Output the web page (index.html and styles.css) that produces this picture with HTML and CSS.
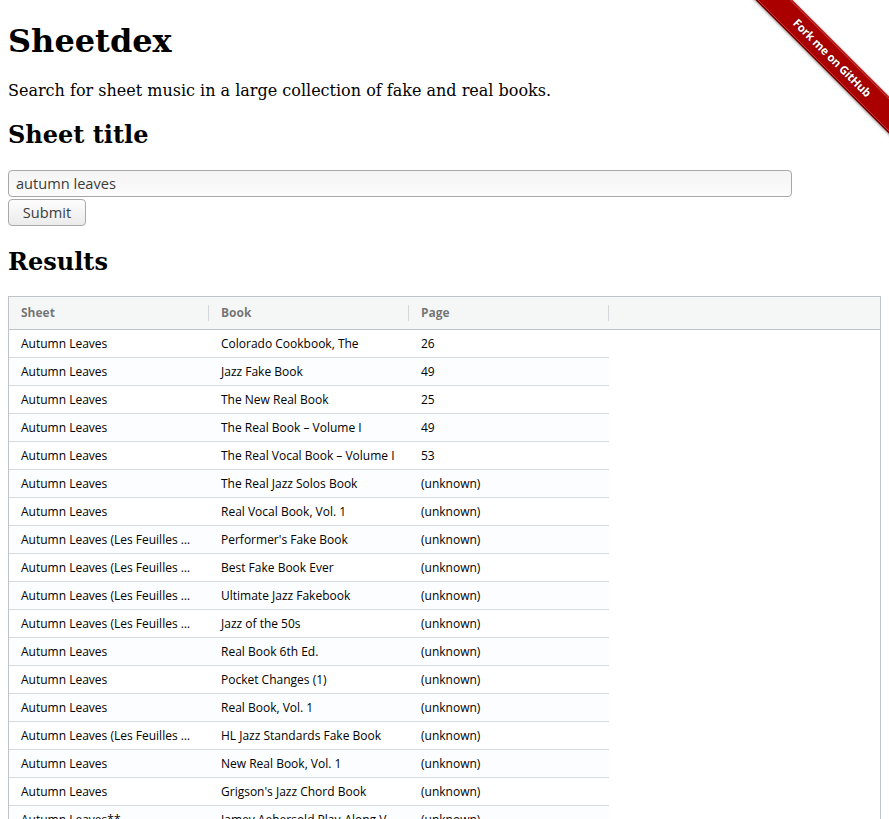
FILE: index.html
```html
<!DOCTYPE html>
<html lang="en">
<head>
<meta charset="utf-8">
<title>Sheetdex</title>
<link rel="stylesheet" href="styles.css">
</head>
<body>
<div class="ribbon-wrap"><a class="ribbon" href="#">Fork me on GitHub</a></div>
<h1 class="title">Sheetdex</h1>
<p class="lead">Search for sheet music in a large collection of fake and real books.</p>
<h2 class="section">Sheet title</h2>
<form class="search">
  <input class="search-input" type="text" value="autumn leaves">
  <button class="search-btn" type="button">Submit</button>
</form>
<h2 class="section results-title">Results</h2>
<div class="grid">
  <div class="grid-header">
    <div class="hcell">Sheet</div>
    <div class="hcell">Book</div>
    <div class="hcell">Page</div>
  </div>
  <div class="grid-body">
    <div class="row"><div class="cell">Autumn Leaves</div><div class="cell">Colorado Cookbook, The</div><div class="cell">26</div></div>
    <div class="row"><div class="cell">Autumn Leaves</div><div class="cell">Jazz Fake Book</div><div class="cell">49</div></div>
    <div class="row"><div class="cell">Autumn Leaves</div><div class="cell">The New Real Book</div><div class="cell">25</div></div>
    <div class="row"><div class="cell">Autumn Leaves</div><div class="cell">The Real Book – Volume I</div><div class="cell">49</div></div>
    <div class="row"><div class="cell">Autumn Leaves</div><div class="cell">The Real Vocal Book – Volume I</div><div class="cell">53</div></div>
    <div class="row"><div class="cell">Autumn Leaves</div><div class="cell">The Real Jazz Solos Book</div><div class="cell">(unknown)</div></div>
    <div class="row"><div class="cell">Autumn Leaves</div><div class="cell">Real Vocal Book, Vol. 1</div><div class="cell">(unknown)</div></div>
    <div class="row"><div class="cell">Autumn Leaves (Les Feuilles Mortes)</div><div class="cell">Performer's Fake Book</div><div class="cell">(unknown)</div></div>
    <div class="row"><div class="cell">Autumn Leaves (Les Feuilles Mortes)</div><div class="cell">Best Fake Book Ever</div><div class="cell">(unknown)</div></div>
    <div class="row"><div class="cell">Autumn Leaves (Les Feuilles Mortes)</div><div class="cell">Ultimate Jazz Fakebook</div><div class="cell">(unknown)</div></div>
    <div class="row"><div class="cell">Autumn Leaves (Les Feuilles Mortes)</div><div class="cell">Jazz of the 50s</div><div class="cell">(unknown)</div></div>
    <div class="row"><div class="cell">Autumn Leaves</div><div class="cell">Real Book 6th Ed.</div><div class="cell">(unknown)</div></div>
    <div class="row"><div class="cell">Autumn Leaves</div><div class="cell">Pocket Changes (1)</div><div class="cell">(unknown)</div></div>
    <div class="row"><div class="cell">Autumn Leaves</div><div class="cell">Real Book, Vol. 1</div><div class="cell">(unknown)</div></div>
    <div class="row"><div class="cell">Autumn Leaves (Les Feuilles Mortes)</div><div class="cell">HL Jazz Standards Fake Book</div><div class="cell">(unknown)</div></div>
    <div class="row"><div class="cell">Autumn Leaves</div><div class="cell">New Real Book, Vol. 1</div><div class="cell">(unknown)</div></div>
    <div class="row"><div class="cell">Autumn Leaves</div><div class="cell">Grigson's Jazz Chord Book</div><div class="cell">(unknown)</div></div>
    <div class="row"><div class="cell">Autumn Leaves**</div><div class="cell">Jamey Aebersold Play-Along Vol. 54</div><div class="cell">(unknown)</div></div>
    <div class="row"><div class="cell">Autumn Leaves</div><div class="cell">Jazz Standards</div><div class="cell">(unknown)</div></div>
  </div>
</div>
</body>
</html>
```

FILE: styles.css
```css
html, body {
  background: #fff;
}
body {
  margin: 8px;
  font-family: "DejaVu Serif", serif;
  color: #000;
}
.title {
  font-size: 32px;
  font-weight: bold;
  margin: 15px 0 22px;
  line-height: 1.164;
}
.lead {
  font-size: 16px;
  margin: 0 0 20px;
  line-height: 1.164;
}
.section {
  font-size: 24px;
  font-weight: bold;
  margin: 0;
  line-height: 1.164;
}
.search {
  display: flex;
  flex-direction: column;
  align-items: flex-start;
  gap: 2px;
  margin: 21px 0 0;
}
.search-input {
  box-sizing: border-box;
  width: 784px;
  height: 27px;
  margin: 0;
  padding: 0 7px;
  border: 1px solid #a7a7a7;
  border-radius: 4px;
  background: linear-gradient(#f4f4f4, #fcfcfc);
  font-family: "Open Sans", sans-serif;
  font-size: 14.6px;
  color: #3c3c3c;
  outline: none;
}
.search-btn {
  box-sizing: border-box;
  width: 78px;
  height: 27px;
  margin: 0;
  padding: 0;
  border: 1px solid #a9a9a9;
  border-radius: 4px;
  background: linear-gradient(#fdfdfd, #ebebeb);
  font-family: "Open Sans", sans-serif;
  font-size: 14.6px;
  color: #3c3c3c;
}
.results-title {
  margin-top: 22px;
}
.grid {
  margin-top: 20px;
  border: 1px solid #bdc3c7;
  font-family: "Open Sans", sans-serif;
  font-size: 12px;
  color: #000;
  border-bottom: none;
}
.grid-header {
  display: flex;
  height: 32px;
  background: #f5f7f7;
  border-bottom: 1px solid #bdc3c7;
}
.hcell {
  position: relative;
  box-sizing: border-box;
  width: 200px;
  padding: 0 12px;
  display: flex;
  align-items: center;
  font-weight: bold;
  color: rgba(0, 0, 0, 0.54);
}
.hcell::after {
  content: "";
  position: absolute;
  right: 0;
  top: 8px;
  height: 16px;
  width: 1px;
  background: #d4d8da;
}
.grid-body {
  display: flex;
  flex-direction: column;
}
.row {
  display: flex;
  width: 600px;
  height: 27px;
  border-bottom: 1px solid #d9dcde;
  background: #fff;
}
.row:nth-child(even) {
  background: #fcfdfe;
}
.cell {
  box-sizing: border-box;
  width: 200px;
  padding: 0 12px;
  line-height: 27px;
  white-space: nowrap;
  overflow: hidden;
  text-overflow: ellipsis;
}
.ribbon-wrap {
  position: absolute;
  top: 0;
  right: 0;
  width: 149px;
  height: 149px;
  overflow: hidden;
  pointer-events: none;
}
.ribbon {
  position: absolute;
  left: -19px;
  top: 45px;
  width: 222px;
  height: 26px;
  box-sizing: border-box;
  transform: rotate(45deg);
  background: #a00;
  border-top: 1px solid #c33;
  border-bottom: 1px solid #700;
  box-shadow: 0 1px 3px rgba(0, 0, 0, 0.45), inset 0 1px 0 rgba(255,255,255,0.25), inset 0 -1px 0 rgba(255,255,255,0.25);
  color: #fff;
  font-family: "Open Sans", sans-serif;
  font-weight: bold;
  font-size: 11.5px;
  line-height: 24px;
  text-align: center;
  text-decoration: none;
  text-shadow: 0 0 2px rgba(0, 0, 0, 0.5);
  letter-spacing: -0.2px;
}
```
